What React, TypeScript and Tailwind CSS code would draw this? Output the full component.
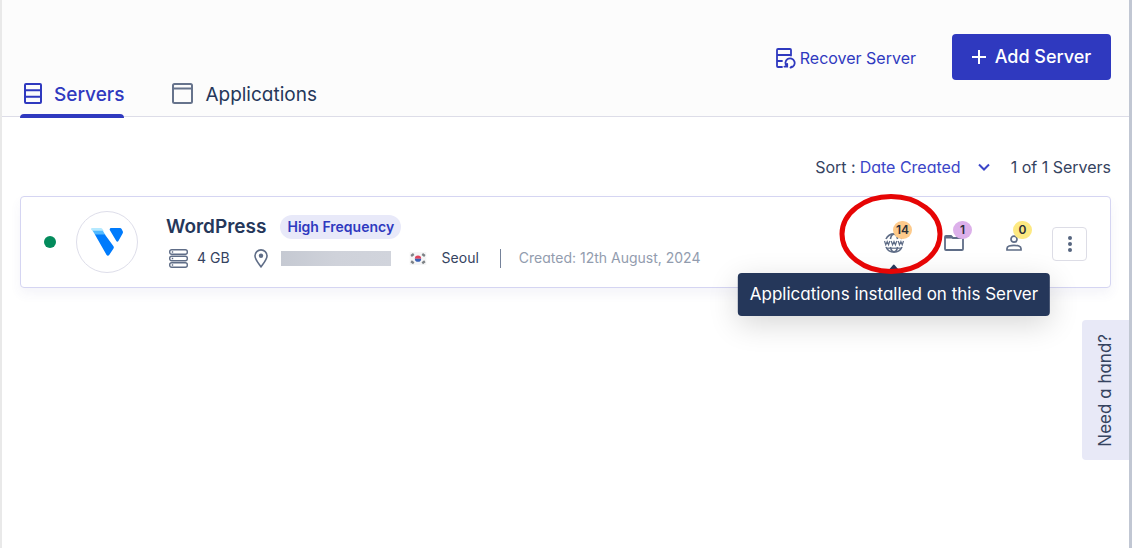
import React from 'react';

interface IconProps {
    className?: string;
}

const ServerIcon: React.FC<IconProps> = ({ className }) => (
    <svg className={className} viewBox="0 0 18 21" fill="none" stroke="currentColor" strokeWidth="2">
        <rect x="1" y="1" width="16" height="19" rx="1" />
        <path d="M1 7.2h16M1 13.8h16" />
    </svg>
);

const WindowIcon: React.FC<IconProps> = ({ className }) => (
    <svg className={className} viewBox="0 0 21 21" fill="none" stroke="currentColor" strokeWidth="2">
        <rect x="1" y="1" width="19" height="19" rx="1.5" />
        <path d="M1 5.5h19" />
    </svg>
);

const RecoverIcon: React.FC<IconProps> = ({ className }) => (
    <svg className={className} viewBox="0 0 20 21" fill="none" stroke="currentColor" strokeWidth="1.8" strokeLinecap="round">
        <path d="M15 7.5V2a1 1 0 0 0-1-1H2a1 1 0 0 0-1 1v16a1 1 0 0 0 1 1h4M1 7h14M1 13h5" />
        <path d="M10.800 18.200a4.600 4.600 0 1 1 4 1.300M8.400 18.600h2.800v-2.800M14.500 19.600l1-1" />
    </svg>
);

const StackIcon: React.FC<IconProps> = ({ className }) => (
    <svg className={className} viewBox="0 0 19 19" fill="none" stroke="currentColor" strokeWidth="1.4">
        <rect x="0.7" y="0.7" width="17.6" height="4.6" rx="2" />
        <rect x="0.7" y="7.2" width="17.6" height="4.6" rx="2" />
        <rect x="0.7" y="13.7" width="17.6" height="4.6" rx="2" />
        <path d="M2.8 3h1.4M2.8 9.5h1.4M2.8 16h1.4" />
    </svg>
);

const PinIcon: React.FC<IconProps> = ({ className }) => (
    <svg className={className} viewBox="0 0 14 19" fill="none" stroke="currentColor" strokeWidth="1.6">
        <path d="M7 17.8C4.8 14.6 1 10.4 1 6.9a6 6 0 0 1 12 0c0 3.5-3.8 7.7-6 10.9z" />
        <circle cx="7" cy="6.7" r="2.2" fill="currentColor" stroke="none" />
    </svg>
);

const VultrLogo: React.FC<IconProps> = ({ className }) => (
    <svg className={className} viewBox="0 0 32 28">
        <path d="M1.2 0h8.600c.7 0 1.200.3 1.600.9l1.500 2.300H1.800L.2 1.600C-.2.8.3 0 1.200 0z" fill="#b5e9ff" />
        <path d="M1.600 2.800h10.200l2.600 4.200H4.200z" fill="#51b9ff" />
        <path d="M3.900 6.500h10l8.600 11.800c.5.800.5 1.500 0 2.300L18.200 27c-.6 1-2 1-2.600 0z" fill="#007bfc" />
        <path d="M20.200 0H29c.7 0 1.200.3 1.600.9l1 2.200c.5.800.5 1.600 0 2.400L27.400 13c-.5.900-1.600.9-2.100 0L18.900 2.300C18.300 1.200 18.900 0 20.200 0z" fill="#007bfc" />
    </svg>
);

const KoreaFlag: React.FC<IconProps> = ({ className }) => (
    <svg className={className} viewBox="0 0 18 14">
        <rect width="18" height="14" fill="#f5f5f6" />
        <path d="M5.6 7.200a3.400 3.400 0 0 1 6.800 0z" fill="#e0435c" />
        <path d="M5.600 7.200a3.400 3.400 0 0 0 6.800 0z" fill="#3a62b5" />
        <path d="M1.600 4.200l2.800-2M1.600 10l2.800 2M16.400 4.200l-2.800-2M16.400 10l-2.800 2" stroke="#7d8286" strokeWidth="2.6" />
    </svg>
);

const GlobeIcon: React.FC<IconProps> = ({ className }) => (
    <svg className={className} viewBox="0 0 20 20" fill="none" stroke="currentColor" strokeWidth="1.6">
        <path d="M2 6a8.800 8.800 0 0 1 16 0M2 14a8.800 8.800 0 0 0 16 0M6.400 6C7 3.200 8.400 1.200 10 1.200S13 3.200 13.600 6M6.400 14c.6 2.800 2 4.800 3.600 4.800s3-2 3.600-4.800" />
        <path d="M2.500 15.200h15" strokeWidth="1.200" />
        <path d="M.5 8l1.300 3.800L3.200 8.600l1.300 3.200L5.800 8M7.200 8l1.400 3.800L10 8.600l1.400 3.200L12.800 8M14.200 8l1.300 3.800 1.400-3.200 1.300 3.200L19.500 8" strokeWidth="1.200" />
    </svg>
);

const FolderIcon: React.FC<IconProps> = ({ className }) => (
    <svg className={className} viewBox="0 0 20 16" fill="none" stroke="currentColor" strokeWidth="1.8">
        <path d="M1 14V2a1 1 0 0 1 1-1h5l2 2h9a1 1 0 0 1 1 1v10a1 1 0 0 1-1 1H2a1 1 0 0 1-1-1z" />
        <path d="M1 1h6l2 2.5H1z" fill="currentColor" stroke="none" />
    </svg>
);

const UserIcon: React.FC<IconProps> = ({ className }) => (
    <svg className={className} viewBox="0 0 16 16" fill="none" stroke="currentColor" strokeWidth="1.7">
        <circle cx="8" cy="4.2" r="3" />
        <path d="M1 15v-1.500c0-2 3.500-3.200 7-3.200s7 1.200 7 3.200V15z" />
    </svg>
);

const PlusIcon: React.FC<IconProps> = ({ className }) => (
    <svg className={className} viewBox="0 0 14 14" fill="none" stroke="currentColor" strokeWidth="2">
        <path d="M7 0v14M0 7h14" />
    </svg>
);

const ChevronIcon: React.FC<IconProps> = ({ className }) => (
    <svg className={className} viewBox="0 0 12 8" fill="none" stroke="currentColor" strokeWidth="2">
        <path d="M1 1.5l5 5 5-5" />
    </svg>
);

const DotsIcon: React.FC<IconProps> = ({ className }) => (
    <svg className={className} viewBox="0 0 4 16" fill="currentColor">
        <circle cx="2" cy="2" r="2" />
        <circle cx="2" cy="8" r="2" />
        <circle cx="2" cy="14" r="2" />
    </svg>
);

interface CounterProps {
    label: string;
    count: number;
    badgeClass: string;
    children: React.ReactNode;
}

// Icon button with a count bubble on its top right corner
const Counter: React.FC<CounterProps> = ({ label, count, badgeClass, children }) => (
    <button type="button" aria-label={label} className="relative flex h-8 w-5 items-center justify-center pt-[2px] text-[#5f6d87]">
        {children}
        <span className={`absolute -top-[5px] left-[9px] flex h-[18px] w-[19px] items-center justify-center rounded-full text-xs font-semibold text-[#2b2f38] ${badgeClass}`}>
            {count}
        </span>
    </button>
);

const Header: React.FC = () => (
    <header className="border-b border-[#dddde8] bg-[#fcfcfc] px-[18px] pt-[34px]">
        <div className="flex items-center justify-end gap-9">
            <a href="#recover" className="flex items-center gap-1 pt-[2px] text-base text-[#2f39bf]">
                <RecoverIcon className="h-[21px] w-5" />
                Recover Server
            </a>
            <button type="button" className="flex h-[46px] w-[159px] items-center justify-center gap-[9px] rounded bg-[#2f39bf] text-lg font-medium text-white">
                <PlusIcon className="h-[14px] w-[14px]" />
                Add Server
            </button>
        </div>
        <nav className="-mb-[2px] flex h-[38px] gap-12 text-[19px]">
            <a href="#servers" className="flex flex-col text-[#2f39bf]">
                <span className="flex grow items-center gap-3 pb-1 pl-1 font-medium">
                    <ServerIcon className="mb-[3px] h-[21px] w-[18px]" />
                    Servers
                </span>
                <span className="h-1 rounded-t bg-[#2f39bf]" />
            </a>
            <a href="#applications" className="flex items-center gap-3 pb-2 text-[#25375a]">
                <WindowIcon className="mb-[3px] h-[21px] w-[21px] text-[#66738c]" />
                Applications
            </a>
        </nav>
    </header>
);

const ServerCard: React.FC = () => (
    <article className="flex h-[92px] items-center rounded border border-[#d5d5f2] bg-white pr-[23px] pl-[23px] shadow-[0_6px_12px_rgba(70,70,160,0.06)]">
        <span className="h-3 w-3 shrink-0 rounded-full bg-[#038b5c]" />
        <div className="ml-5 flex h-[62px] w-[62px] shrink-0 items-center justify-center rounded-full border border-[#dedeea]">
            <VultrLogo className="h-7 w-8" />
        </div>
        <div className="ml-7 grow pb-[3px]">
            <div className="flex items-center gap-[14px] text-[#25375a]">
                <h2 className="text-[19px] leading-7 font-semibold">WordPress</h2>
                <span className="rounded-full bg-[#e8e9f9] px-[7px] py-[2px] text-sm font-semibold text-[#2f39bf]">High Frequency</span>
            </div>
            <div className="mt-[7px] flex h-5 items-center text-sm text-[#35435f]">
                <StackIcon className="ml-[3px] h-[19px] w-[19px] text-[#5f6d87]" />
                <span className="ml-[9px]">4 GB</span>
                <PinIcon className="ml-6 h-[19px] w-[14px] text-[#5f6d87]" />
                <span className="ml-[13px] h-[15px] w-[110px] bg-linear-to-r from-[#c5c9d2] via-[#cfd2da] to-[#d1d4dc]" />
                <KoreaFlag className="ml-[18px] h-[13px] w-[18px]" />
                <span className="ml-[15px]">Seoul</span>
                <span className="ml-[21px] h-[19px] w-px bg-[#75829a]" />
                <span className="ml-[18px] text-[#929cae]">Created: 12th August, 2024</span>
            </div>
        </div>
        <div className="flex items-center gap-10">
            <div className="relative">
                <Counter label="Applications" count={14} badgeClass="bg-[#fdca8b]">
                    <GlobeIcon className="h-5 w-5" />
                </Counter>
                <div className="absolute top-[47px] left-1/2 z-10 -translate-x-1/2">
                    <svg className="absolute -top-[9px] left-1/2 h-[10px] w-3 -translate-x-1/2" viewBox="0 0 12 10">
                        <path d="M0 7L5 1.200q1-1.200 2 0L12 7v3H0z" fill="#25375a" />
                    </svg>
                    <div role="tooltip" className="flex h-[43px] items-center rounded bg-[#25375a] px-3 text-[17px] whitespace-nowrap text-white shadow-[0_8px_30px_rgba(0,0,0,0.16)]">
                        Applications installed on this Server
                    </div>
                </div>
                <svg className="absolute -top-[33px] -left-[45px] z-20 h-[82px] w-[105px] max-w-none" viewBox="0 0 105 82">
                    <ellipse cx="52" cy="41" rx="49" ry="37.5" fill="none" stroke="#e60505" strokeWidth="5" />
                </svg>
            </div>
            <Counter label="Projects" count={1} badgeClass="bg-[#dcb0ea]">
                <FolderIcon className="h-4 w-5" />
            </Counter>
            <Counter label="Team members" count={0} badgeClass="bg-[#fde982]">
                <UserIcon className="h-4 w-4" />
            </Counter>
        </div>
        <button type="button" aria-label="Server options" className="mt-[3px] ml-7 flex h-[34px] w-[35px] shrink-0 items-center justify-center rounded border border-[#dddde6] bg-white text-[#56657f]">
            <DotsIcon className="h-4 w-1" />
        </button>
    </article>
);

const App: React.FC = () => {
    return (
        <div className="relative min-h-screen border-r-[3px] border-l-2 border-r-[#c1c7d3] border-l-[#e9e9e9] bg-white font-['Inter','Open_Sans',sans-serif] [font-feature-settings:'cv11']">
            <Header />
            <main className="px-[18px] pt-[38px]">
                <div className="mb-[17px] flex h-6 items-center justify-end text-base text-[#35435f]">
                    <label htmlFor="sort">Sort :</label>
                    <span className="relative ml-1 flex items-center text-[#3b45c8]">
                        <select id="sort" className="appearance-none bg-transparent pr-7 outline-none">
                            <option>Date Created</option>
                        </select>
                        <ChevronIcon className="pointer-events-none absolute right-0 h-2 w-3" />
                    </span>
                    <span className="ml-[21px]">1 of 1 Servers</span>
                </div>
                <ServerCard />
            </main>
            <button type="button" className="absolute top-80 right-0 flex h-[140px] w-[47px] items-center justify-center rounded-l bg-[#e8e9f7] text-[17px] text-[#35435f]">
                <span className="rotate-180 [writing-mode:vertical-rl]">Need a hand?</span>
            </button>
        </div>
    );
};

export default App;
